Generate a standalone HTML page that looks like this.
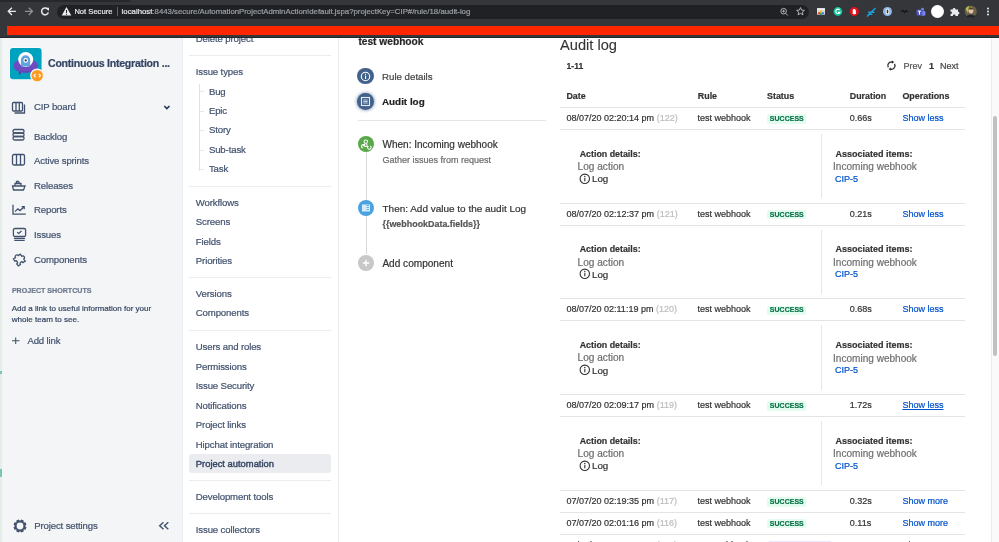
<!DOCTYPE html>
<html><head><meta charset="utf-8"><style>
html,body{margin:0;padding:0;width:999px;height:542px;overflow:hidden;background:#fff;}
body{position:relative;will-change:transform;font-family:"Liberation Sans",sans-serif;}
.t{position:absolute;white-space:nowrap;-webkit-text-stroke:0.2px currentColor;}
.r{position:absolute;}
.s{position:absolute;overflow:visible;}
</style></head><body>
<div class="r" style="left:0px;top:37px;width:182px;height:505px;background:#f4f5f7;"></div>
<div class="r" style="left:182px;top:37px;width:1px;height:505px;background:#ebecf0;"></div>
<div class="r" style="left:0px;top:37px;width:1.5px;height:505px;background:#e4ede6;"></div>
<div class="r" style="left:0px;top:370.5px;width:1.5px;height:3px;background:#7cc4b8;"></div>
<div class="r" style="left:0px;top:469px;width:1.5px;height:8px;background:#7cc4b8;"></div>
<svg class="s" style="left:10.2px;top:47.7px" width="36" height="36" viewBox="0 0 36 36">
<rect x="-0.8" y="-0.8" width="33.2" height="32.9" rx="3.8" fill="#ffffff" opacity="0.8"/>
<rect x="0" y="0" width="31.6" height="31.3" rx="3" fill="#00a3bf"/>
<ellipse cx="15.8" cy="17.7" rx="12.2" ry="7" fill="#6e4bc0"/>
<rect x="8.8" y="23.5" width="2" height="3" rx="0.8" fill="#5a3aa8"/>
<circle cx="15.7" cy="11.5" r="7.5" fill="#fff"/>
<path d="M10.9 18.4 V12 A4.65 4.65 0 0 1 20.2 12 V18.4z" fill="#5fa3e0"/>
<circle cx="15.7" cy="12.4" r="2.3" fill="#fff"/><circle cx="15.7" cy="12.4" r="1.1" fill="#253858"/>
<path d="M3.6 17.7 Q15.8 21 28 17.7 A12.2 7 0 0 1 3.6 17.7z" fill="#6e4bc0"/>
<path d="M5.5 21.8 Q15.8 26.5 26.1 21.8 Q15.8 25.6 5.5 21.8z" fill="#5a3aa8"/>
<circle cx="27.2" cy="27.6" r="6.4" fill="#ff991f" stroke="#f4f5f7" stroke-width="1.4"/>
<path d="M25.6 25.8l-1.7 1.8 1.7 1.8M28.8 25.8l1.7 1.8-1.7 1.8" stroke="#fff" stroke-width="1.1" fill="none"/>
</svg>
<div class="t" style="left:48px;top:58px;font-size:10.6px;line-height:10.6px;color:#344563;font-weight:bold;letter-spacing:-0.25px;">Continuous Integration ...</div>
<div class="t" style="left:34px;top:102px;font-size:9.6px;line-height:9.6px;color:#42526e;font-weight:normal;letter-spacing:-0.15px;">CIP board</div>
<div class="t" style="left:34px;top:132px;font-size:9.6px;line-height:9.6px;color:#42526e;font-weight:normal;letter-spacing:-0.15px;">Backlog</div>
<div class="t" style="left:34px;top:156px;font-size:9.6px;line-height:9.6px;color:#42526e;font-weight:normal;letter-spacing:-0.15px;">Active sprints</div>
<div class="t" style="left:34px;top:181px;font-size:9.6px;line-height:9.6px;color:#42526e;font-weight:normal;letter-spacing:-0.15px;">Releases</div>
<div class="t" style="left:34px;top:205px;font-size:9.6px;line-height:9.6px;color:#42526e;font-weight:normal;letter-spacing:-0.15px;">Reports</div>
<div class="t" style="left:34px;top:230px;font-size:9.6px;line-height:9.6px;color:#42526e;font-weight:normal;letter-spacing:-0.15px;">Issues</div>
<div class="t" style="left:34px;top:255px;font-size:9.6px;line-height:9.6px;color:#42526e;font-weight:normal;letter-spacing:-0.15px;">Components</div>
<svg class="s" style="left:11px;top:101px;" width="16" height="14" viewBox="0 0 16 14"><rect x="1.5" y="1.5" width="10" height="8.5" rx="1" stroke="#42526e" stroke-width="1.3" fill="none"/><path d="M5 1.5v8.5M8.3 1.5v8.5M13.5 3.5v8.5H3.5" stroke="#42526e" stroke-width="1.3" fill="none"/></svg>
<svg class="s" style="left:11px;top:128px;" width="16" height="14" viewBox="0 0 16 14"><rect x="2" y="1.5" width="11" height="3.5" rx="1.5" stroke="#42526e" stroke-width="1.3" fill="none"/><rect x="2" y="5" width="11" height="3.5" rx="1.5" stroke="#42526e" stroke-width="1.3" fill="none"/><rect x="2" y="8.5" width="11" height="3.5" rx="1.5" stroke="#42526e" stroke-width="1.3" fill="none"/></svg>
<svg class="s" style="left:11px;top:153px;" width="16" height="14" viewBox="0 0 16 14"><rect x="1.5" y="1.5" width="12" height="10.5" rx="1.5" stroke="#42526e" stroke-width="1.3" fill="none"/><path d="M5.5 1.5v10.5M9.5 1.5v10.5" stroke="#42526e" stroke-width="1.3" fill="none"/></svg>
<svg class="s" style="left:11px;top:178px;" width="16" height="14" viewBox="0 0 16 14"><path d="M1.5 8h12.5l-1.5 4H2.5z" stroke="#42526e" stroke-width="1.3" fill="none"/><path d="M4 8V5.5h6V8M5.5 5.5V3.5h2l1 2" stroke="#42526e" stroke-width="1.3" fill="none"/></svg>
<svg class="s" style="left:11px;top:203px;" width="16" height="14" viewBox="0 0 16 14"><path d="M2 1.8V11.2H14.8" stroke="#42526e" stroke-width="1.3" fill="none"/><path d="M4 8.6L6.8 5.9L9 7.6L12.9 4" stroke="#42526e" stroke-width="1.3" fill="none"/><path d="M10.6 3.7H13.2V6.3" stroke="#42526e" stroke-width="1.3" fill="none"/></svg>
<svg class="s" style="left:11px;top:226px;" width="16" height="16" viewBox="0 0 16 16"><rect x="2.4" y="2.5" width="12.2" height="8" rx="1.6" stroke="#42526e" stroke-width="1.3" fill="none"/><path d="M6.2 6.2l1.5 1.3 2.8-2.6" stroke="#42526e" stroke-width="1.3" fill="none"/><path d="M3 12.4h11M3.3 14.4h10.4" stroke="#42526e" stroke-width="1.3" fill="none"/></svg>
<svg class="s" style="left:10px;top:251px;" width="18" height="16" viewBox="0 0 18 16"><g transform="rotate(-35 9 8.2)"><path d="M4.5 4.8h2.6a1.65 1.65 0 1 1 3.3 0h2.6v2.6a1.65 1.65 0 1 1 0 3.3v2.6h-2.6a1.65 1.65 0 1 0 -3.3 0H4.5v-2.6a1.65 1.65 0 1 0 0 -3.3z" stroke="#42526e" stroke-width="1.3" fill="none"/></g></svg>
<svg class="s" style="left:162px;top:103px;" width="10" height="8" viewBox="0 0 10 8"><path d="M2.3 3l2.6 2.6 2.6-2.6" stroke="#253858" stroke-width="1.6" fill="none"/></svg>
<div class="t" style="left:11.9px;top:288px;font-size:7.1px;line-height:7.1px;color:#6b778c;font-weight:bold;">PROJECT SHORTCUTS</div>
<div class="t" style="left:11.7px;top:305px;font-size:8.05px;line-height:8.05px;color:#344563;font-weight:normal;">Add a link to useful information for your</div>
<div class="t" style="left:11.7px;top:316px;font-size:8.05px;line-height:8.05px;color:#344563;font-weight:normal;">whole team to see.</div>
<svg class="s" style="left:11px;top:334px;" width="10" height="12" viewBox="0 0 10 12"><path d="M4.7 3.5v6.5M1 6.75h7.5" stroke="#42526e" stroke-width="1.1"/></svg>
<div class="t" style="left:27.4px;top:336px;font-size:9.6px;line-height:9.6px;color:#42526e;font-weight:normal;letter-spacing:-0.15px;">Add link</div>
<svg class="s" style="left:11.9px;top:517.8px;" width="16" height="16" viewBox="0 0 16 16"><path d="M13.20 8.17 L14.48 9.26 L13.47 11.69 L11.80 11.55 L11.55 11.80 L11.69 13.47 L9.26 14.48 L8.17 13.20 L7.83 13.20 L6.74 14.48 L4.31 13.47 L4.45 11.80 L4.20 11.55 L2.53 11.69 L1.52 9.26 L2.80 8.17 L2.80 7.83 L1.52 6.74 L2.53 4.31 L4.20 4.45 L4.45 4.20 L4.31 2.53 L6.74 1.52 L7.83 2.80 L8.17 2.80 L9.26 1.52 L11.69 2.53 L11.55 4.20 L11.80 4.45 L13.47 4.31 L14.48 6.74 L13.20 7.83z" fill="#42526e"/><circle cx="8" cy="8" r="3.4" fill="#f4f5f7"/></svg>
<div class="t" style="left:34.2px;top:521px;font-size:9.6px;line-height:9.6px;color:#42526e;font-weight:normal;letter-spacing:-0.13px;">Project settings</div>
<svg class="s" style="left:157px;top:519px;" width="13" height="13" viewBox="0 0 13 13"><path d="M6.5 3.3L2.7 6.8l3.8 3.5M11.3 3.3L7.5 6.8l3.8 3.5" stroke="#42526e" stroke-width="1.45" fill="none"/></svg>
<div class="r" style="left:338px;top:37px;width:1px;height:505px;background:#ebecf0;"></div>
<div class="t" style="left:195.8px;top:34px;font-size:9.6px;line-height:9.6px;color:#42526e;font-weight:normal;letter-spacing:-0.13px;">Delete project</div>
<div class="r" style="left:189.2px;top:55px;width:141.8px;height:1px;background:#ebecf0;"></div>
<div class="t" style="left:195.8px;top:67px;font-size:9.6px;line-height:9.6px;color:#42526e;font-weight:normal;letter-spacing:-0.13px;">Issue types</div>
<div class="r" style="left:199px;top:84px;width:1px;height:86.5px;background:#dfe1e6;"></div>
<div class="t" style="left:208.9px;top:87px;font-size:9.6px;line-height:9.6px;color:#42526e;font-weight:normal;letter-spacing:-0.13px;">Bug</div>
<div class="r" style="left:200px;top:91.39999999999999px;width:4px;height:1px;background:#e6e8ec;"></div>
<div class="t" style="left:208.9px;top:106px;font-size:9.6px;line-height:9.6px;color:#42526e;font-weight:normal;letter-spacing:-0.13px;">Epic</div>
<div class="r" style="left:200px;top:111.0px;width:4px;height:1px;background:#e6e8ec;"></div>
<div class="t" style="left:208.9px;top:125px;font-size:9.6px;line-height:9.6px;color:#42526e;font-weight:normal;letter-spacing:-0.13px;">Story</div>
<div class="r" style="left:200px;top:130.0px;width:4px;height:1px;background:#e6e8ec;"></div>
<div class="t" style="left:208.9px;top:145px;font-size:9.6px;line-height:9.6px;color:#42526e;font-weight:normal;letter-spacing:-0.13px;">Sub-task</div>
<div class="r" style="left:200px;top:149.5px;width:4px;height:1px;background:#e6e8ec;"></div>
<div class="t" style="left:208.9px;top:164px;font-size:9.6px;line-height:9.6px;color:#42526e;font-weight:normal;letter-spacing:-0.13px;">Task</div>
<div class="r" style="left:200px;top:168.9px;width:4px;height:1px;background:#e6e8ec;"></div>
<div class="r" style="left:189.2px;top:186px;width:141.8px;height:1px;background:#ebecf0;"></div>
<div class="t" style="left:195.8px;top:198px;font-size:9.6px;line-height:9.6px;color:#42526e;font-weight:normal;letter-spacing:-0.13px;">Workflows</div>
<div class="t" style="left:195.8px;top:217px;font-size:9.6px;line-height:9.6px;color:#42526e;font-weight:normal;letter-spacing:-0.13px;">Screens</div>
<div class="t" style="left:195.8px;top:237px;font-size:9.6px;line-height:9.6px;color:#42526e;font-weight:normal;letter-spacing:-0.13px;">Fields</div>
<div class="t" style="left:195.8px;top:256px;font-size:9.6px;line-height:9.6px;color:#42526e;font-weight:normal;letter-spacing:-0.13px;">Priorities</div>
<div class="r" style="left:189.2px;top:277px;width:141.8px;height:1px;background:#ebecf0;"></div>
<div class="t" style="left:195.8px;top:289px;font-size:9.6px;line-height:9.6px;color:#42526e;font-weight:normal;letter-spacing:-0.13px;">Versions</div>
<div class="t" style="left:195.8px;top:308px;font-size:9.6px;line-height:9.6px;color:#42526e;font-weight:normal;letter-spacing:-0.13px;">Components</div>
<div class="r" style="left:189.2px;top:330px;width:141.8px;height:1px;background:#ebecf0;"></div>
<div class="r" style="left:189.2px;top:454.3px;width:141.8px;height:19px;background:#ebecf0;border-radius:3px;"></div>
<div class="t" style="left:195.8px;top:342px;font-size:9.6px;line-height:9.6px;color:#42526e;font-weight:normal;letter-spacing:-0.13px;">Users and roles</div>
<div class="t" style="left:195.8px;top:362px;font-size:9.6px;line-height:9.6px;color:#42526e;font-weight:normal;letter-spacing:-0.13px;">Permissions</div>
<div class="t" style="left:195.8px;top:381px;font-size:9.6px;line-height:9.6px;color:#42526e;font-weight:normal;letter-spacing:-0.13px;">Issue Security</div>
<div class="t" style="left:195.8px;top:401px;font-size:9.6px;line-height:9.6px;color:#42526e;font-weight:normal;letter-spacing:-0.13px;">Notifications</div>
<div class="t" style="left:195.8px;top:420px;font-size:9.6px;line-height:9.6px;color:#42526e;font-weight:normal;letter-spacing:-0.13px;">Project links</div>
<div class="t" style="left:195.8px;top:440px;font-size:9.6px;line-height:9.6px;color:#42526e;font-weight:normal;letter-spacing:-0.13px;">Hipchat integration</div>
<div class="t" style="left:195.8px;top:459px;font-size:9.4px;line-height:9.4px;color:#344563;font-weight:normal;-webkit-text-stroke:0.4px #344563;">Project automation</div>
<div class="r" style="left:189.2px;top:480px;width:141.8px;height:1px;background:#ebecf0;"></div>
<div class="t" style="left:195.8px;top:492px;font-size:9.6px;line-height:9.6px;color:#42526e;font-weight:normal;letter-spacing:-0.13px;">Development tools</div>
<div class="r" style="left:189.2px;top:513px;width:141.8px;height:1px;background:#ebecf0;"></div>
<div class="t" style="left:195.8px;top:525px;font-size:9.6px;line-height:9.6px;color:#42526e;font-weight:normal;letter-spacing:-0.13px;">Issue collectors</div>
<div class="t" style="left:358.4px;top:37px;font-size:10.2px;line-height:10.2px;color:#262626;font-weight:bold;">test webhook</div>
<div class="r" style="left:357.2px;top:67.8px;width:16.6px;height:16.6px;border-radius:50%;background:#42628c"></div>
<svg class="s" style="left:360px;top:70.5px;" width="12" height="12" viewBox="0 0 12 12"><circle cx="5.5" cy="5.5" r="4.2" stroke="#fff" stroke-width="1.1" fill="none"/><rect x="5" y="4.6" width="1.1" height="3.4" fill="#fff"/><circle cx="5.55" cy="3.3" r="0.65" fill="#fff"/></svg>
<div class="t" style="left:382px;top:72px;font-size:9.7px;line-height:9.7px;color:#444;font-weight:normal;">Rule details</div>
<div class="r" style="left:357.2px;top:93px;width:16.6px;height:16.6px;border-radius:50%;background:#42628c;box-shadow:0 0 3px 1px rgba(66,98,140,.45)"></div>
<svg class="s" style="left:360px;top:95.8px;" width="12" height="12" viewBox="0 0 12 12"><rect x="1.5" y="1.5" width="8" height="8" stroke="#e6ecf3" stroke-width="1.1" fill="none"/><path d="M3.3 4h4.4M3.3 5.5h4.4M3.3 7h4.4" stroke="#e6ecf3" stroke-width="0.8"/></svg>
<div class="t" style="left:382px;top:97px;font-size:9.86px;line-height:9.86px;color:#222;font-weight:bold;">Audit log</div>
<div class="r" style="left:358px;top:120.3px;width:188px;height:1.2px;background:#e5e5e5;"></div>
<div class="r" style="left:365.6px;top:152px;width:1px;height:102px;background:#d9d9d9;"></div>
<div class="r" style="left:358px;top:136.2px;width:16.2px;height:16.2px;border-radius:50%;background:#5aa84a"></div>
<svg class="s" style="left:360px;top:138px;" width="12" height="12" viewBox="0 0 12 12"><path d="M7.3 4.6A1.75 1.75 0 1 0 5.2 5.3L3.4 8.3M3.1 10.1A1.75 1.75 0 1 1 5 8.5H8.6M10.3 8A1.75 1.75 0 1 1 7.6 9.7L6.3 4.6" stroke="#fff" stroke-width="1.05" fill="none"/></svg>
<div class="t" style="left:382.5px;top:140px;font-size:10.02px;line-height:10.02px;color:#333;font-weight:normal;">When: Incoming webhook</div>
<div class="t" style="left:382.5px;top:156px;font-size:9.01px;line-height:9.01px;color:#6b6b6b;font-weight:normal;">Gather issues from request</div>
<div class="r" style="left:358px;top:200.2px;width:16.2px;height:16.2px;border-radius:50%;background:#4aa3df"></div>
<svg class="s" style="left:360px;top:202px;" width="12" height="12" viewBox="0 0 12 12"><rect x="2" y="2.5" width="8" height="7" fill="#d7ecfa"/><path d="M6.5 3.5h2.5M6.5 5.5h2.5M6.5 7.5h2.5" stroke="#4aa3df" stroke-width="0.8"/></svg>
<div class="t" style="left:382.5px;top:204px;font-size:9.97px;line-height:9.97px;color:#333;font-weight:normal;">Then: Add value to the audit Log</div>
<div class="t" style="left:382.5px;top:220px;font-size:8.91px;line-height:8.91px;color:#555;font-weight:bold;">{{webhookData.fields}}</div>
<div class="r" style="left:358.2px;top:255.2px;width:15.6px;height:15.6px;border-radius:50%;background:#c8c8c8"></div>
<svg class="s" style="left:360px;top:257px;" width="12" height="12" viewBox="0 0 12 12"><path d="M6 2.8v6.4M2.8 6h6.4" stroke="#fff" stroke-width="1.4"/></svg>
<div class="t" style="left:382.4px;top:259px;font-size:10.08px;line-height:10.08px;color:#333;font-weight:normal;">Add component</div>
<div class="t" style="left:560px;top:38px;font-size:14.65px;line-height:14.65px;color:#333;font-weight:normal;-webkit-text-stroke:0.1px #333;">Audit log</div>
<div class="t" style="left:566.5px;top:62px;font-size:8.6px;line-height:8.6px;color:#333;font-weight:bold;">1-11</div>
<svg class="s" style="left:885px;top:59px;" width="13" height="13" viewBox="0 0 13 13"><path d="M3.28 8.4A3.6 3.6 0 0 1 7.33 3.12M9.52 4.8A3.6 3.6 0 0 1 5.47 10.08" stroke="#333" stroke-width="1.35" fill="none"/><path d="M6.9 1.5L9.3 3.1 6.9 4.7z M5.9 8.5L3.5 10.1 5.9 11.7z" fill="#333"/></svg>
<div class="t" style="left:903.5px;top:62px;font-size:9.05px;line-height:9.05px;color:#555;font-weight:normal;">Prev</div>
<div class="t" style="left:929px;top:62px;font-size:9.05px;line-height:9.05px;color:#333;font-weight:bold;">1</div>
<div class="t" style="left:940px;top:62px;font-size:9.05px;line-height:9.05px;color:#444;font-weight:normal;">Next</div>
<div class="t" style="left:566.4px;top:92px;font-size:8.9px;line-height:8.9px;color:#333;font-weight:bold;">Date</div>
<div class="t" style="left:697.8px;top:92px;font-size:8.9px;line-height:8.9px;color:#333;font-weight:bold;">Rule</div>
<div class="t" style="left:767px;top:92px;font-size:8.9px;line-height:8.9px;color:#333;font-weight:bold;">Status</div>
<div class="t" style="left:849.8px;top:92px;font-size:8.86px;line-height:8.86px;color:#333;font-weight:bold;">Duration</div>
<div class="t" style="left:902.4px;top:92px;font-size:8.94px;line-height:8.94px;color:#333;font-weight:bold;">Operations</div>
<div class="r" style="left:559.6px;top:107px;width:405.4px;height:1px;background:#e4e4e4;"></div>
<div class="t" style="left:566.4px;top:114px;font-size:9.03px;line-height:9.03px;color:#333;font-weight:normal;">08/07/20 02:20:14 pm <span style="color:#bdbdbd">(122)</span></div>
<div class="t" style="left:697.4px;top:114px;font-size:9.03px;line-height:9.03px;color:#333;font-weight:normal;">test webhook</div>
<div class="r" style="left:767px;top:114.20px;width:38.5px;height:9.5px;border-radius:2px;background:#e3fcef"></div>
<div class="t" style="left:769.8px;top:116px;font-size:6.9px;line-height:6.9px;color:#087245;font-weight:bold;letter-spacing:0.1px;">SUCCESS</div>
<div class="t" style="left:849.8px;top:114px;font-size:9.03px;line-height:9.03px;color:#333;font-weight:normal;">0.66s</div>
<div class="t" style="left:902.4px;top:114px;font-size:9.03px;line-height:9.03px;color:#0052cc;font-weight:normal;">Show less</div>
<div class="r" style="left:559.6px;top:129px;width:405.4px;height:1px;background:#e4e4e4;"></div>
<div class="r" style="left:821.4px;top:133.8px;width:1px;height:64.5px;background:#e6e6e6;"></div>
<div class="t" style="left:579.7px;top:150px;font-size:8.85px;line-height:8.85px;color:#333;font-weight:bold;">Action details:</div>
<div class="t" style="left:577.6px;top:162px;font-size:10.1px;line-height:10.1px;color:#6e6e6e;font-weight:normal;">Log action</div>
<svg class="s" style="left:578.5px;top:172.5px;" width="12" height="12" viewBox="0 0 12 12"><circle cx="5.8" cy="5.8" r="4.7" stroke="#333" stroke-width="1.1" fill="none"/><rect x="5.25" y="4.7" width="1.1" height="3.6" fill="#333"/><circle cx="5.8" cy="3.4" r="0.7" fill="#333"/></svg>
<div class="t" style="left:592px;top:174px;font-size:9.75px;line-height:9.75px;color:#333;font-weight:normal;">Log</div>
<div class="t" style="left:835.4px;top:150px;font-size:9.0px;line-height:9.0px;color:#333;font-weight:bold;">Associated items:</div>
<div class="t" style="left:833px;top:162px;font-size:10.07px;line-height:10.07px;color:#707070;font-weight:normal;">Incoming webhook</div>
<div class="t" style="left:835px;top:175px;font-size:9.0px;line-height:9.0px;color:#0052cc;font-weight:normal;">CIP-5</div>
<div class="r" style="left:559.6px;top:203px;width:405.4px;height:1px;background:#e4e4e4;"></div>
<div class="t" style="left:566.4px;top:210px;font-size:9.03px;line-height:9.03px;color:#333;font-weight:normal;">08/07/20 02:12:37 pm <span style="color:#bdbdbd">(121)</span></div>
<div class="t" style="left:697.4px;top:210px;font-size:9.03px;line-height:9.03px;color:#333;font-weight:normal;">test webhook</div>
<div class="r" style="left:767px;top:209.90px;width:38.5px;height:9.5px;border-radius:2px;background:#e3fcef"></div>
<div class="t" style="left:769.8px;top:212px;font-size:6.9px;line-height:6.9px;color:#087245;font-weight:bold;letter-spacing:0.1px;">SUCCESS</div>
<div class="t" style="left:849.8px;top:210px;font-size:9.03px;line-height:9.03px;color:#333;font-weight:normal;">0.21s</div>
<div class="t" style="left:902.4px;top:210px;font-size:9.03px;line-height:9.03px;color:#0052cc;font-weight:normal;">Show less</div>
<div class="r" style="left:559.6px;top:225px;width:405.4px;height:1px;background:#e4e4e4;"></div>
<div class="r" style="left:821.4px;top:229.50000000000003px;width:1px;height:64.5px;background:#e6e6e6;"></div>
<div class="t" style="left:579.7px;top:245px;font-size:8.85px;line-height:8.85px;color:#333;font-weight:bold;">Action details:</div>
<div class="t" style="left:577.6px;top:258px;font-size:10.1px;line-height:10.1px;color:#6e6e6e;font-weight:normal;">Log action</div>
<svg class="s" style="left:578.5px;top:268.20000000000005px;" width="12" height="12" viewBox="0 0 12 12"><circle cx="5.8" cy="5.8" r="4.7" stroke="#333" stroke-width="1.1" fill="none"/><rect x="5.25" y="4.7" width="1.1" height="3.6" fill="#333"/><circle cx="5.8" cy="3.4" r="0.7" fill="#333"/></svg>
<div class="t" style="left:592px;top:270px;font-size:9.75px;line-height:9.75px;color:#333;font-weight:normal;">Log</div>
<div class="t" style="left:835.4px;top:245px;font-size:9.0px;line-height:9.0px;color:#333;font-weight:bold;">Associated items:</div>
<div class="t" style="left:833px;top:258px;font-size:10.07px;line-height:10.07px;color:#707070;font-weight:normal;">Incoming webhook</div>
<div class="t" style="left:835px;top:270px;font-size:9.0px;line-height:9.0px;color:#0052cc;font-weight:normal;">CIP-5</div>
<div class="r" style="left:559.6px;top:298px;width:405.4px;height:1px;background:#e4e4e4;"></div>
<div class="t" style="left:566.4px;top:305px;font-size:9.03px;line-height:9.03px;color:#333;font-weight:normal;">08/07/20 02:11:19 pm <span style="color:#bdbdbd">(120)</span></div>
<div class="t" style="left:697.4px;top:305px;font-size:9.03px;line-height:9.03px;color:#333;font-weight:normal;">test webhook</div>
<div class="r" style="left:767px;top:305.60px;width:38.5px;height:9.5px;border-radius:2px;background:#e3fcef"></div>
<div class="t" style="left:769.8px;top:307px;font-size:6.9px;line-height:6.9px;color:#087245;font-weight:bold;letter-spacing:0.1px;">SUCCESS</div>
<div class="t" style="left:849.8px;top:305px;font-size:9.03px;line-height:9.03px;color:#333;font-weight:normal;">0.68s</div>
<div class="t" style="left:902.4px;top:305px;font-size:9.03px;line-height:9.03px;color:#0052cc;font-weight:normal;">Show less</div>
<div class="r" style="left:559.6px;top:320px;width:405.4px;height:1px;background:#e4e4e4;"></div>
<div class="r" style="left:821.4px;top:325.2px;width:1px;height:64.5px;background:#e6e6e6;"></div>
<div class="t" style="left:579.7px;top:341px;font-size:8.85px;line-height:8.85px;color:#333;font-weight:bold;">Action details:</div>
<div class="t" style="left:577.6px;top:353px;font-size:10.1px;line-height:10.1px;color:#6e6e6e;font-weight:normal;">Log action</div>
<svg class="s" style="left:578.5px;top:363.9px;" width="12" height="12" viewBox="0 0 12 12"><circle cx="5.8" cy="5.8" r="4.7" stroke="#333" stroke-width="1.1" fill="none"/><rect x="5.25" y="4.7" width="1.1" height="3.6" fill="#333"/><circle cx="5.8" cy="3.4" r="0.7" fill="#333"/></svg>
<div class="t" style="left:592px;top:366px;font-size:9.75px;line-height:9.75px;color:#333;font-weight:normal;">Log</div>
<div class="t" style="left:835.4px;top:341px;font-size:9.0px;line-height:9.0px;color:#333;font-weight:bold;">Associated items:</div>
<div class="t" style="left:833px;top:354px;font-size:10.07px;line-height:10.07px;color:#707070;font-weight:normal;">Incoming webhook</div>
<div class="t" style="left:835px;top:366px;font-size:9.0px;line-height:9.0px;color:#0052cc;font-weight:normal;">CIP-5</div>
<div class="r" style="left:559.6px;top:394px;width:405.4px;height:1px;background:#e4e4e4;"></div>
<div class="t" style="left:566.4px;top:401px;font-size:9.03px;line-height:9.03px;color:#333;font-weight:normal;">08/07/20 02:09:17 pm <span style="color:#bdbdbd">(119)</span></div>
<div class="t" style="left:697.4px;top:401px;font-size:9.03px;line-height:9.03px;color:#333;font-weight:normal;">test webhook</div>
<div class="r" style="left:767px;top:401.30px;width:38.5px;height:9.5px;border-radius:2px;background:#e3fcef"></div>
<div class="t" style="left:769.8px;top:403px;font-size:6.9px;line-height:6.9px;color:#087245;font-weight:bold;letter-spacing:0.1px;">SUCCESS</div>
<div class="t" style="left:849.8px;top:401px;font-size:9.03px;line-height:9.03px;color:#333;font-weight:normal;">1.72s</div>
<div class="t" style="left:902.4px;top:401px;font-size:9.03px;line-height:9.03px;color:#0052cc;font-weight:normal;text-decoration:underline;">Show less</div>
<div class="r" style="left:559.6px;top:416px;width:405.4px;height:1px;background:#e4e4e4;"></div>
<div class="r" style="left:821.4px;top:420.9px;width:1px;height:64.5px;background:#e6e6e6;"></div>
<div class="t" style="left:579.7px;top:437px;font-size:8.85px;line-height:8.85px;color:#333;font-weight:bold;">Action details:</div>
<div class="t" style="left:577.6px;top:449px;font-size:10.1px;line-height:10.1px;color:#6e6e6e;font-weight:normal;">Log action</div>
<svg class="s" style="left:578.5px;top:459.59999999999997px;" width="12" height="12" viewBox="0 0 12 12"><circle cx="5.8" cy="5.8" r="4.7" stroke="#333" stroke-width="1.1" fill="none"/><rect x="5.25" y="4.7" width="1.1" height="3.6" fill="#333"/><circle cx="5.8" cy="3.4" r="0.7" fill="#333"/></svg>
<div class="t" style="left:592px;top:461px;font-size:9.75px;line-height:9.75px;color:#333;font-weight:normal;">Log</div>
<div class="t" style="left:835.4px;top:437px;font-size:9.0px;line-height:9.0px;color:#333;font-weight:bold;">Associated items:</div>
<div class="t" style="left:833px;top:449px;font-size:10.07px;line-height:10.07px;color:#707070;font-weight:normal;">Incoming webhook</div>
<div class="t" style="left:835px;top:462px;font-size:9.0px;line-height:9.0px;color:#0052cc;font-weight:normal;">CIP-5</div>
<div class="r" style="left:559.6px;top:490px;width:405.4px;height:1px;background:#e4e4e4;"></div>
<div class="t" style="left:566.4px;top:497px;font-size:9.03px;line-height:9.03px;color:#333;font-weight:normal;">07/07/20 02:19:35 pm <span style="color:#bdbdbd">(117)</span></div>
<div class="t" style="left:697.4px;top:497px;font-size:9.03px;line-height:9.03px;color:#333;font-weight:normal;">test webhook</div>
<div class="r" style="left:767px;top:497.00px;width:38.5px;height:9.5px;border-radius:2px;background:#e3fcef"></div>
<div class="t" style="left:769.8px;top:499px;font-size:6.9px;line-height:6.9px;color:#087245;font-weight:bold;letter-spacing:0.1px;">SUCCESS</div>
<div class="t" style="left:849.8px;top:497px;font-size:9.03px;line-height:9.03px;color:#333;font-weight:normal;">0.32s</div>
<div class="t" style="left:902.4px;top:497px;font-size:9.03px;line-height:9.03px;color:#0052cc;font-weight:normal;">Show more</div>
<div class="r" style="left:559.6px;top:512px;width:405.4px;height:1px;background:#e4e4e4;"></div>
<div class="t" style="left:566.4px;top:519px;font-size:9.03px;line-height:9.03px;color:#333;font-weight:normal;">07/07/20 02:01:16 pm <span style="color:#bdbdbd">(116)</span></div>
<div class="t" style="left:697.4px;top:519px;font-size:9.03px;line-height:9.03px;color:#333;font-weight:normal;">test webhook</div>
<div class="r" style="left:767px;top:518.90px;width:38.5px;height:9.5px;border-radius:2px;background:#e3fcef"></div>
<div class="t" style="left:769.8px;top:521px;font-size:6.9px;line-height:6.9px;color:#087245;font-weight:bold;letter-spacing:0.1px;">SUCCESS</div>
<div class="t" style="left:849.8px;top:519px;font-size:9.03px;line-height:9.03px;color:#333;font-weight:normal;">0.11s</div>
<div class="t" style="left:902.4px;top:519px;font-size:9.03px;line-height:9.03px;color:#0052cc;font-weight:normal;">Show more</div>
<div class="r" style="left:559.6px;top:534px;width:405.4px;height:1px;background:#e4e4e4;"></div>
<div class="t" style="left:566.4px;top:541px;font-size:9.03px;line-height:9.03px;color:#333;font-weight:normal;">07/07/20 02:00:15 pm <span style="color:#bdbdbd">(115)</span></div>
<div class="t" style="left:697.4px;top:541px;font-size:9.03px;line-height:9.03px;color:#333;font-weight:normal;">test webhook</div>
<div class="r" style="left:767.5px;top:540.80px;width:64px;height:9.5px;border-radius:2px;background:#eae6ff"></div>
<div class="t" style="left:770px;top:542px;font-size:6.8px;line-height:6.8px;color:#403294;font-weight:bold;letter-spacing:0.1px;">NO ACTIONS</div>
<div class="t" style="left:849.8px;top:541px;font-size:9.03px;line-height:9.03px;color:#333;font-weight:normal;">0.10s</div>
<div class="t" style="left:902.4px;top:541px;font-size:9.03px;line-height:9.03px;color:#0052cc;font-weight:normal;">Show more</div>
<div class="r" style="left:559.6px;top:555px;width:405.4px;height:1px;background:#e4e4e4;"></div>
<div class="r" style="left:991px;top:37px;width:8px;height:505px;background:#fafafa;"></div>
<div class="r" style="left:991px;top:37px;width:0.8px;height:505px;background:#ececec;"></div>
<div class="r" style="left:992.7px;top:115.5px;width:4.8px;height:240.5px;background:#c1c1c1;border-radius:3px;"></div>
<div class="r" style="left:0px;top:0px;width:999px;height:38px;background:#35363a;"></div>
<div class="r" style="left:0px;top:37px;width:999px;height:1px;background:#242528;"></div>
<div class="r" style="left:0px;top:0px;width:130px;height:2.2px;background:#27282b;"></div>
<div class="r" style="left:57px;top:4.5px;width:752px;height:14px;background:#202124;border-radius:7px;"></div>
<svg class="s" style="left:5px;top:4px;" width="16" height="14" viewBox="0 0 16 14"><path d="M10.9 7.3H3.4M6.9 3.7L3.3 7.3l3.6 3.6" stroke="#e8eaed" stroke-width="1.35" fill="none"/></svg>
<svg class="s" style="left:21px;top:4px;" width="16" height="14" viewBox="0 0 16 14"><path d="M3.9 7.3h7.4M7.8 3.7l3.6 3.6-3.6 3.6" stroke="#8e9094" stroke-width="1.35" fill="none"/></svg>
<svg class="s" style="left:37px;top:4px;" width="16" height="14" viewBox="0 0 16 14"><path d="M10.9 5.6A3.4 3.4 0 1 0 11.3 8.4" stroke="#e8eaed" stroke-width="1.5" fill="none"/><path d="M8.7 3.7h3.3v3.3z" fill="#e8eaed"/></svg>
<svg class="s" style="left:61px;top:6px;" width="11" height="11" viewBox="0 0 11 11"><path d="M5.5 1L10.3 9.6H0.7z" fill="#e8eaed"/><rect x="5" y="4" width="1" height="3" fill="#202124"/><rect x="5" y="7.8" width="1" height="1" fill="#202124"/></svg>
<div class="t" style="left:74.4px;top:8px;font-size:7.6px;line-height:7.6px;color:#e8eaed;font-weight:normal;">Not Secure</div>
<div class="r" style="left:116.5px;top:7px;width:0.8px;height:9px;background:#5f6368;"></div>
<div class="t" style="left:121.6px;top:8px;font-size:7.81px;line-height:7.81px;color:#9aa0a6;font-weight:normal;"><span style="color:#e8eaed">localhost</span>:8443/secure/AutomationProjectAdminAction!default.jspa?projectKey=CIP#/rule/18/audit-log</div>
<svg class="s" style="left:778px;top:5px;" width="12" height="13" viewBox="0 0 12 13"><circle cx="5.6" cy="6.2" r="2.8" stroke="#bdc1c6" stroke-width="0.9" fill="none"/><path d="M7.6 8.3l2.2 2.2M4.3 6.2h2.6M5.6 4.9v2.6" stroke="#bdc1c6" stroke-width="0.9"/></svg>
<svg class="s" style="left:794px;top:5px;" width="13" height="13" viewBox="0 0 13 13"><path d="M6.5 2.6l1.15 2.5 2.75.25-2.1 1.8.7 2.7-2.5-1.5-2.5 1.5.7-2.7-2.1-1.8 2.75-.25z" stroke="#bdc1c6" stroke-width="0.9" fill="none"/></svg>
<svg class="s" style="left:816px;top:7px;" width="10" height="9" viewBox="0 0 10 9"><rect x="1" y="1.3" width="8" height="6.5" rx="0.6" fill="#d9d9d9"/><rect x="1" y="1.3" width="8" height="1.6" fill="#f2f2f2"/><circle cx="3.2" cy="6.3" r="1.3" fill="#ea4335"/><circle cx="5" cy="6.6" r="1.3" fill="#34a853"/><circle cx="6.8" cy="6.3" r="1.3" fill="#4285f4"/><circle cx="5" cy="4.8" r="1.2" fill="#fbbc05"/></svg>
<svg class="s" style="left:832px;top:6px;" width="12" height="12" viewBox="0 0 12 12"><circle cx="5.9" cy="5.5" r="4.4" fill="#15c39a"/><path d="M7.6 3.9A2.2 2.2 0 1 0 7.9 6.4H6.1" stroke="#fff" stroke-width="1.1" fill="none"/></svg>
<svg class="s" style="left:849px;top:6px;" width="12" height="12" viewBox="0 0 12 12"><circle cx="5.3" cy="5.5" r="4.5" fill="#e4111c"/><path d="M4.3 3h1.6l1 1.6v2.6l-1 1H4.3l-.6-1V4z" fill="#fff"/></svg>
<svg class="s" style="left:865px;top:6px;" width="12" height="12" viewBox="0 0 12 12"><path d="M2 10.5L10.5 2M3.2 6.2h6.2M2.8 8.4h4.6" stroke="#1fa0d8" stroke-width="1.4" fill="none"/></svg>
<svg class="s" style="left:882px;top:6px;" width="12" height="12" viewBox="0 0 12 12"><circle cx="5.5" cy="5.5" r="4.5" fill="#8fb8e8"/><ellipse cx="5.5" cy="5.5" rx="1.8" ry="3" fill="#e8f0fa"/><ellipse cx="5.5" cy="5.5" rx="0.8" ry="1.9" fill="#35363a"/></svg>
<svg class="s" style="left:900px;top:8px;" width="9" height="7" viewBox="0 0 9 7"><path d="M1 3.5l2-1 1.5 2 1.5-2 2 1.5" stroke="#111" stroke-width="1.2" fill="none"/></svg>
<svg class="s" style="left:915px;top:6px;" width="12" height="12" viewBox="0 0 12 12"><circle cx="7.5" cy="3.2" r="1.4" fill="#7b83eb"/><rect x="5.8" y="4.8" width="4.6" height="5" rx="1.5" fill="#7b83eb"/><rect x="1.5" y="3.6" width="6" height="6" rx="0.8" fill="#5059c9"/><path d="M3 5.2h3M4.5 5.2v3.4" stroke="#fff" stroke-width="1"/></svg>
<div class="r" style="left:931px;top:4.9px;width:13px;height:13px;border-radius:50%;background:#fff"></div>
<svg class="s" style="left:949px;top:6px;" width="11" height="11" viewBox="0 0 11 11"><path d="M1.5 3.5h2.2a1.4 1.4 0 0 1 2.8 0h2.5v2.2a1.4 1.4 0 0 1 0 2.8v1.5h-2.4a1.4 1.4 0 0 0-2.8 0H1.5V8.2a1.4 1.4 0 0 0 0-2.8z" fill="#e8eaed"/></svg>
<svg class="s" style="left:964px;top:5px;" width="14" height="14" viewBox="0 0 14 14"><circle cx="6.8" cy="6.4" r="6" fill="#6b6048"/><path d="M1.5 4 A6 6 0 0 1 5 0.8 L4 8z" fill="#b8c040"/><ellipse cx="7" cy="5.6" rx="2.4" ry="3" fill="#e8c4a8"/><path d="M4.6 3.8Q7 1.8 9.4 3.8V4.5H4.6z" fill="#4a3a28"/><path d="M2.5 11Q6.8 8 11.2 11L10 12.4H3.6z" fill="#1d2430"/></svg>
<svg class="s" style="left:985px;top:5px;" width="6" height="13" viewBox="0 0 6 13"><circle cx="3" cy="3.6" r="1" fill="#e8eaed"/><circle cx="3" cy="6.6" r="1" fill="#e8eaed"/><circle cx="3" cy="9.6" r="1" fill="#e8eaed"/></svg>
<div class="r" style="left:7px;top:25.6px;width:992px;height:9.8px;background:#ff2600;"></div>
</body></html>
